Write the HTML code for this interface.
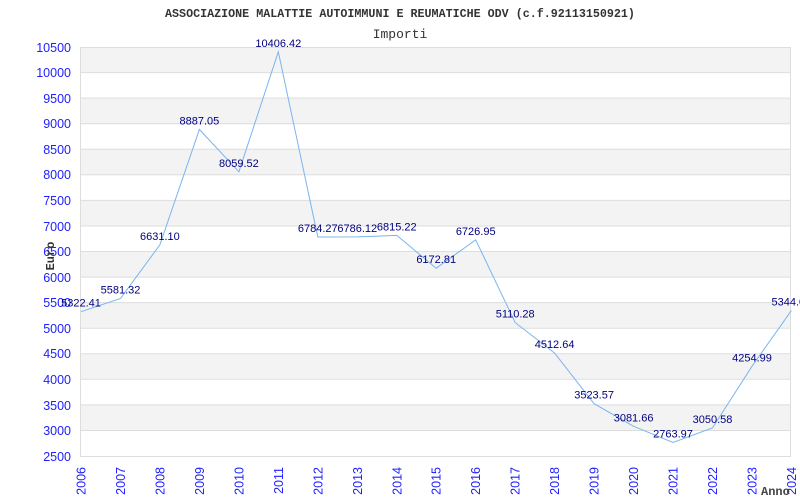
<!DOCTYPE html>
<html><head><meta charset="utf-8"><style>body{margin:0;background:#fff}svg{display:block}</style></head><body>
<svg width="800" height="500" xmlns="http://www.w3.org/2000/svg">
<rect width="800" height="500" fill="#fff"/>
<text x="400" y="17" text-anchor="middle" font-family="Liberation Mono, monospace" font-size="11.7" font-weight="bold" fill="#333">ASSOCIAZIONE MALATTIE AUTOIMMUNI E REUMATICHE ODV (c.f.92113150921)</text>
<text x="400" y="38" text-anchor="middle" font-family="Liberation Mono, monospace" font-size="13" fill="#333">Importi</text>
<g fill="#f3f3f3">
<rect x="81" y="47" width="709" height="25.6"/><rect x="81" y="98.1" width="709" height="25.6"/><rect x="81" y="149.3" width="709" height="25.6"/><rect x="81" y="200.4" width="709" height="25.6"/><rect x="81" y="251.5" width="709" height="25.6"/><rect x="81" y="302.6" width="709" height="25.6"/><rect x="81" y="353.8" width="709" height="25.6"/><rect x="81" y="404.9" width="709" height="25.6"/>
</g>
<g stroke="#ddd" stroke-width="1">
<line x1="81" x2="790" y1="47.5" y2="47.5"/><line x1="81" x2="790" y1="72.6" y2="72.6"/><line x1="81" x2="790" y1="98.1" y2="98.1"/><line x1="81" x2="790" y1="123.7" y2="123.7"/><line x1="81" x2="790" y1="149.3" y2="149.3"/><line x1="81" x2="790" y1="174.8" y2="174.8"/><line x1="81" x2="790" y1="200.4" y2="200.4"/><line x1="81" x2="790" y1="226" y2="226"/><line x1="81" x2="790" y1="251.5" y2="251.5"/><line x1="81" x2="790" y1="277.1" y2="277.1"/><line x1="81" x2="790" y1="302.6" y2="302.6"/><line x1="81" x2="790" y1="328.2" y2="328.2"/><line x1="81" x2="790" y1="353.8" y2="353.8"/><line x1="81" x2="790" y1="379.3" y2="379.3"/><line x1="81" x2="790" y1="404.9" y2="404.9"/><line x1="81" x2="790" y1="430.5" y2="430.5"/><line x1="81" x2="790" y1="456.5" y2="456.5"/>
<line x1="80.5" x2="80.5" y1="47" y2="457"/><line x1="790.5" x2="790.5" y1="47" y2="457"/>
</g>
<g font-family="Liberation Sans, sans-serif" font-size="12.5" fill="#2020ff" text-anchor="end">
<text x="71" y="52">10500</text><text x="71" y="77">10000</text><text x="71" y="103">9500</text><text x="71" y="128">9000</text><text x="71" y="154">8500</text><text x="71" y="179">8000</text><text x="71" y="205">7500</text><text x="71" y="231">7000</text><text x="71" y="256">6500</text><text x="71" y="282">6000</text><text x="71" y="307">5500</text><text x="71" y="333">5000</text><text x="71" y="358">4500</text><text x="71" y="384">4000</text><text x="71" y="410">3500</text><text x="71" y="435">3000</text><text x="71" y="461">2500</text>
</g>
<g font-family="Liberation Sans, sans-serif" font-size="12.5" fill="#2020ff" text-anchor="end">
<text transform="translate(85.5,467) rotate(-90)">2006</text>
<text transform="translate(125,467) rotate(-90)">2007</text>
<text transform="translate(164.4,467) rotate(-90)">2008</text>
<text transform="translate(203.9,467) rotate(-90)">2009</text>
<text transform="translate(243.4,467) rotate(-90)">2010</text>
<text transform="translate(282.8,467) rotate(-90)">2011</text>
<text transform="translate(322.3,467) rotate(-90)">2012</text>
<text transform="translate(361.8,467) rotate(-90)">2013</text>
<text transform="translate(401.3,467) rotate(-90)">2014</text>
<text transform="translate(440.7,467) rotate(-90)">2015</text>
<text transform="translate(480.2,467) rotate(-90)">2016</text>
<text transform="translate(519.7,467) rotate(-90)">2017</text>
<text transform="translate(559.1,467) rotate(-90)">2018</text>
<text transform="translate(598.6,467) rotate(-90)">2019</text>
<text transform="translate(638.1,467) rotate(-90)">2020</text>
<text transform="translate(677.5,467) rotate(-90)">2021</text>
<text transform="translate(717,467) rotate(-90)">2022</text>
<text transform="translate(756.5,467) rotate(-90)">2023</text>
<text transform="translate(795.9,467) rotate(-90)">2024</text>
</g>
<text transform="translate(54,256) rotate(-90)" text-anchor="middle" font-family="Liberation Mono, monospace" font-size="12" font-weight="bold" fill="#333">Euro</text>
<text x="761" y="495" font-family="Liberation Mono, monospace" font-size="12" font-weight="bold" fill="#444">Anno</text>
<polyline fill="none" stroke="#7ab4f0" stroke-width="1" points="81,311.7 120.5,298.5 159.9,244.8 199.4,129.5 238.9,171.8 278.3,51.8 317.8,237 357.3,236.9 396.8,235.4 436.2,268.2 475.7,239.9 515.2,322.6 554.6,353.1 594.1,403.7 633.6,426.3 673,442.5 712.5,427.9 752,366.3 791.4,310.6"/>
<g font-family="Liberation Sans, sans-serif" font-size="11" fill="#000080" text-anchor="middle">
<text x="81" y="306.7">5322.41</text><text x="120.5" y="293.5">5581.32</text><text x="159.9" y="239.8">6631.10</text><text x="199.4" y="124.5">8887.05</text><text x="238.9" y="166.8">8059.52</text><text x="278.3" y="46.8">10406.42</text><text x="317.8" y="232">6784.27</text><text x="357.3" y="231.9">6786.12</text><text x="396.8" y="230.4">6815.22</text><text x="436.2" y="263.2">6172.81</text><text x="475.7" y="234.9">6726.95</text><text x="515.2" y="317.6">5110.28</text><text x="554.6" y="348.1">4512.64</text><text x="594.1" y="398.7">3523.57</text><text x="633.6" y="421.3">3081.66</text><text x="673" y="437.5">2763.97</text><text x="712.5" y="422.9">3050.58</text><text x="752" y="361.3">4254.99</text><text x="791.4" y="305.6">5344.00</text>
</g>
</svg>
</body></html>
